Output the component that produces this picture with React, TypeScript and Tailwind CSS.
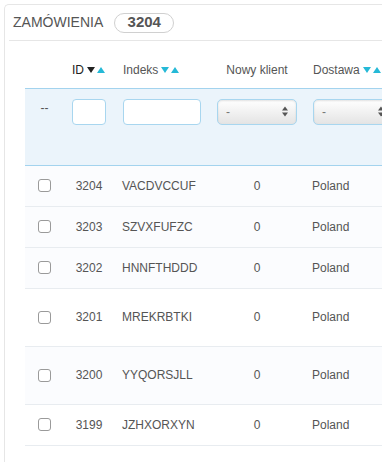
import * as React from 'react';

const orders = [
  { id: 3204, ref: 'VACDVCCUF', h: 'h-[41px]', bg: 'bg-[#fbfcfe]' },
  { id: 3203, ref: 'SZVXFUFZC', h: 'h-[41px]', bg: 'bg-[#fbfcfe]' },
  { id: 3202, ref: 'HNNFTHDDD', h: 'h-[41px]', bg: 'bg-[#fbfcfe]' },
  { id: 3201, ref: 'MREKRBTKI', h: 'h-[58px]', bg: 'bg-white' },
  { id: 3200, ref: 'YYQORSJLL', h: 'h-[58px]', bg: 'bg-[#fbfcfe]' },
  { id: 3199, ref: 'JZHXORXYN', h: 'h-[41px]', bg: 'bg-white' },
];

function SortArrows({ active }: { active?: boolean }) {
  return (
    <span className="ml-[3px] inline-flex items-center gap-[2px] align-middle">
      <svg width="8" height="6" viewBox="0 0 8 6">
        <path d="M0 0 L8 0 L4 6 Z" fill={active ? '#222222' : '#25b9d7'} />
      </svg>
      <svg width="8" height="6" viewBox="0 0 8 6">
        <path d="M0 6 L8 6 L4 0 Z" fill="#25b9d7" />
      </svg>
    </span>
  );
}

function FakeSelect({ width }: { width: string }) {
  return (
    <div
      className={`${width} h-[26px] flex items-center justify-between pl-[8px] pr-[8px] rounded-[5px] border border-[#a8d6ef] bg-gradient-to-b from-white to-[#e4e4e4] shadow-[inset_0_1px_2px_rgba(0,0,0,0.12)] text-[12px] text-[#777]`}
    >
      <span>-</span>
      <svg width="6" height="11" viewBox="0 0 6 11">
        <path d="M0 4.5 L6 4.5 L3 0.5 Z" fill="#555" />
        <path d="M0 6.5 L6 6.5 L3 10.5 Z" fill="#555" />
      </svg>
    </div>
  );
}

function Checkbox() {
  return <div className="w-[13px] h-[13px] rounded-[3px] border border-[#9a9a9a] bg-white mx-auto" />;
}

export default function App() {
  return (
    <div className="w-[382px] h-[462px] overflow-hidden bg-white" style={{ fontFamily: '"Liberation Sans", Arial, sans-serif' }}>
      <div className="ml-[4px] mt-[4px] w-[620px] h-[600px] rounded-tl-[5px] border-l border-t border-[#e6e6e6] pl-[4px]">
        {/* Heading */}
        <div className="h-[36px] flex items-center pl-[4px] border-b border-[#e6e6e6]">
          <span className="text-[14px] text-[#555] uppercase">Zamówienia</span>
          <span className="ml-[11px] h-[20px] w-[60px] flex items-center justify-center rounded-full border border-[#d0d0d0] text-[15px] font-bold text-[#555]">
            3204
          </span>
        </div>

        {/* Table */}
        <div className="ml-[16px]">
          <table className="table-fixed border-collapse text-[12px] text-[#555]">
            <colgroup>
              <col className="w-[39px]" />
              <col className="w-[51px]" />
              <col className="w-[94px]" />
              <col className="w-[96px]" />
              <col className="w-[120px]" />
            </colgroup>
            <thead>
              <tr className="h-[47px]">
                <th />
                <th className="align-bottom pb-[9px] pl-[8px] text-left font-normal">
                  <span className="text-[#222]">ID</span>
                  <SortArrows active />
                </th>
                <th className="align-bottom pb-[9px] pl-[8px] text-left font-normal">
                  Indeks
                  <SortArrows />
                </th>
                <th className="align-bottom pb-[9px] text-center font-normal">Nowy klient</th>
                <th className="align-bottom pb-[9px] pl-[8px] text-left font-normal whitespace-nowrap">
                  Dostawa
                  <SortArrows />
                </th>
              </tr>
              <tr className="h-[77px] bg-[#ebf4fb] border-t border-b border-[#a3d3ee]">
                <td className="align-top pt-[10px] text-center text-[#555]">--</td>
                <td className="align-top pt-[10px] pl-[8px]">
                  <div className="w-[34px] h-[26px] rounded-[4px] border border-[#a8d6ef] bg-white" />
                </td>
                <td className="align-top pt-[10px] pl-[8px]">
                  <div className="w-[78px] h-[26px] rounded-[4px] border border-[#a8d6ef] bg-white" />
                </td>
                <td className="align-top pt-[10px] pl-[8px]">
                  <FakeSelect width="w-[80px]" />
                </td>
                <td className="align-top pt-[10px] pl-[8px]">
                  <FakeSelect width="w-[80px]" />
                </td>
              </tr>
            </thead>
            <tbody>
              {orders.map((o) => (
                <tr key={o.id} className={`${o.h} ${o.bg} border-b border-[#e8ecf0]`}>
                  <td className="align-middle">
                    <Checkbox />
                  </td>
                  <td className="align-middle pl-[8px]">
                    <div className="w-[34px] text-center">{o.id}</div>
                  </td>
                  <td className="align-middle pl-[7px]">{o.ref}</td>
                  <td className="align-middle text-center">0</td>
                  <td className="align-middle pl-[7px]">Poland</td>
                </tr>
              ))}
            </tbody>
          </table>
        </div>
      </div>
    </div>
  );
}
